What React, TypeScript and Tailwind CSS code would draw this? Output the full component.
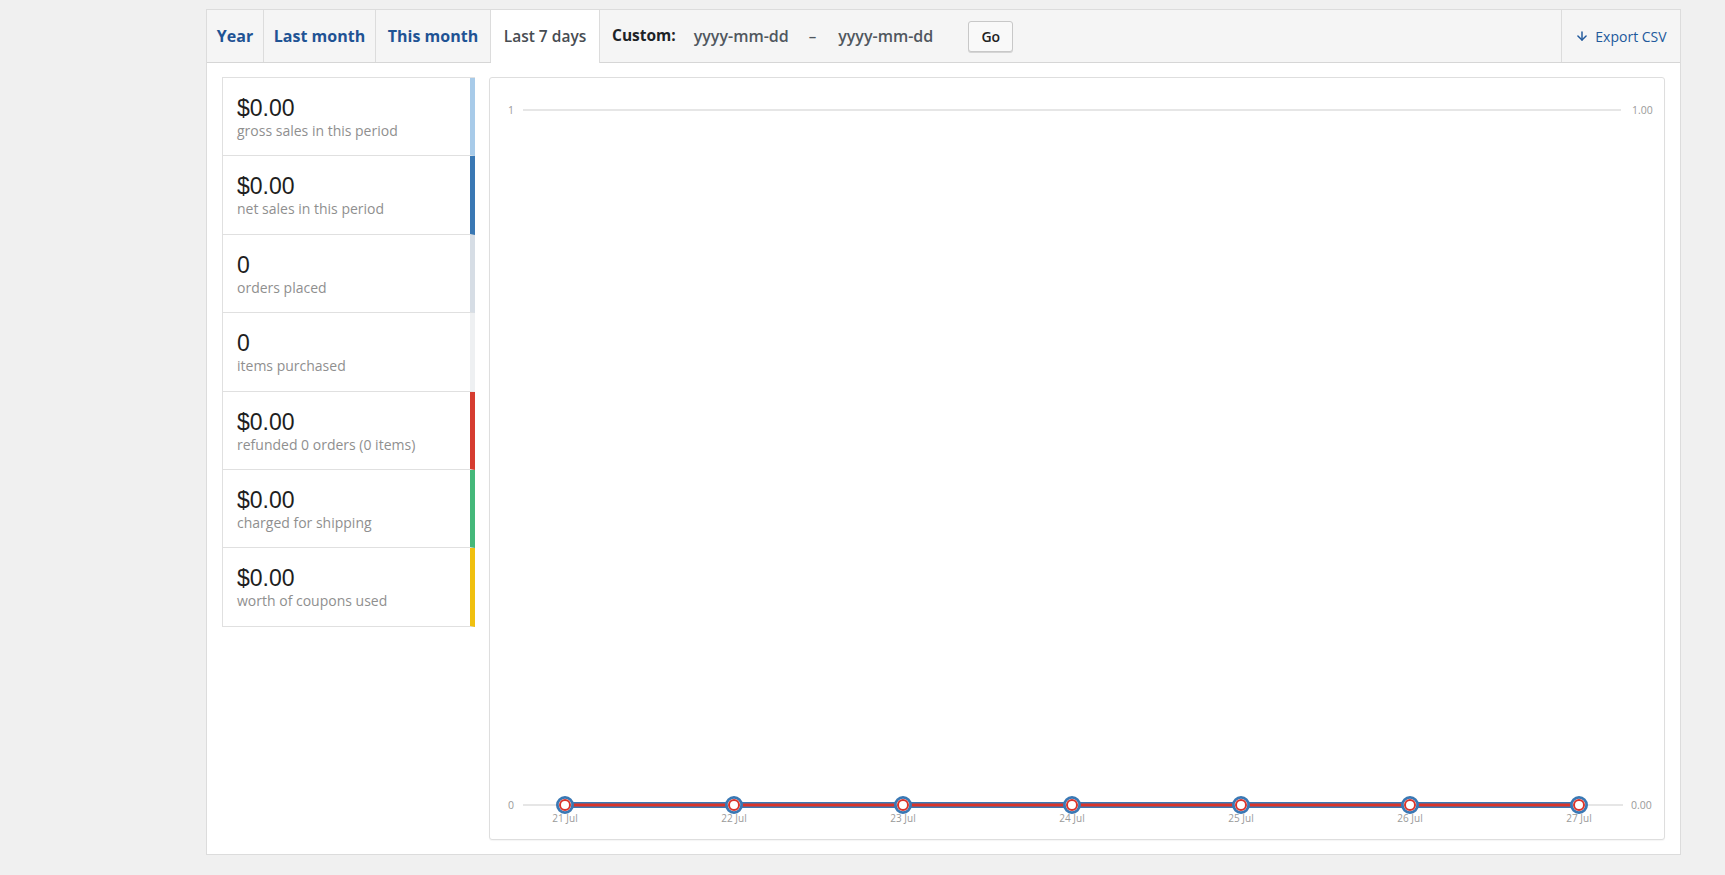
import { ArrowDown } from 'lucide-react';

/**
 * 리포트 범위 탭
 */
const ranges = [
  { label: 'Year', width: 'w-[57px]' },
  { label: 'Last month', width: 'w-[112px]' },
  { label: 'This month', width: 'w-[115px]' },
];

/**
 * 범례 항목
 */
const legend = [
  { value: '$0.00', label: 'gross sales in this period', bar: 'border-r-[#a8cbe9]' },
  { value: '$0.00', label: 'net sales in this period', bar: 'border-r-[#3a78b4]' },
  { value: '0', label: 'orders placed', bar: 'border-r-[#d6dde5]' },
  { value: '0', label: 'items purchased', bar: 'border-r-[#eef0f2]' },
  { value: '$0.00', label: 'refunded 0 orders (0 items)', bar: 'border-r-[#d63c30]' },
  { value: '$0.00', label: 'charged for shipping', bar: 'border-r-[#45b87a]' },
  { value: '$0.00', label: 'worth of coupons used', bar: 'border-r-[#f0c00f]' },
];

const days = ['21 Jul', '22 Jul', '23 Jul', '24 Jul', '25 Jul', '26 Jul', '27 Jul'];

function Chart() {
  const xs = days.map((_, i) => 75 + i * 169);
  const zeroY = 727;

  return (
    <svg width="100%" height="100%" className="block">
      <g fontFamily="'Open Sans', sans-serif" fontSize="10.5" fill="#9a9a9a">
        <text x="18" y="36">1</text>
        <text x="1142" y="36">1.00</text>
        <text x="18" y={zeroY + 4}>0</text>
        <text x="1141" y={zeroY + 4}>0.00</text>
      </g>
      <line x1="33" y1="32" x2="1131" y2="32" stroke="#dedede" strokeWidth="1.5" />
      <line x1="33" y1={zeroY} x2="1133" y2={zeroY} stroke="#dedede" strokeWidth="1.5" />

      <line x1={xs[0]} y1={zeroY} x2={xs[6]} y2={zeroY} stroke="#3a78b4" strokeWidth="6" />
      <line x1={xs[0]} y1={zeroY} x2={xs[6]} y2={zeroY} stroke="#d9342b" strokeWidth="3" />

      {xs.map((x, i) => (
        <g key={days[i]}>
          <circle cx={x} cy={zeroY} r="7.6" fill="#fff" stroke="#3a78b4" strokeWidth="2.8" />
          <circle cx={x} cy={zeroY} r="5" fill="#fff" stroke="#d9342b" strokeWidth="2" />
          <text
            x={x}
            y={zeroY + 17}
            textAnchor="middle"
            fontFamily="'Open Sans', sans-serif"
            fontSize="10"
            fill="#9a9a9a"
          >
            {days[i]}
          </text>
        </g>
      ))}
    </svg>
  );
}

export default function App() {
  return (
    <div className="min-h-[875px] bg-[#f0f0f0] pl-[206px] pt-[9px] font-['Open_Sans',sans-serif]">
      <div className="w-[1475px] h-[846px] flex flex-col border border-[#dcdcdc] bg-white">
        {/* 상단 탭 */}
        <div className="flex h-[53px] shrink-0 items-stretch border-b border-[#d6d6d6] bg-[#f5f5f5]">
          {ranges.map((r) => (
            <div
              key={r.label}
              className={`${r.width} flex items-center justify-center border-r border-[#dcdcdc] text-[16px] font-bold text-[#1f5394]`}
            >
              {r.label}
            </div>
          ))}
          <div className="w-[109px] -mb-px flex items-center justify-center border-r border-[#dcdcdc] bg-white text-[15.5px] font-semibold text-[#474c52]">
            Last 7 days
          </div>
          <div className="flex items-center pl-[12px] text-[15px]">
            <span className="text-[15.5px] font-bold text-[#1d2327]">Custom:</span>
            <span className="ml-[18px] font-semibold text-[16px] text-[#50575e]">yyyy-mm-dd</span>
            <span className="ml-[20px] font-semibold text-[#50575e]">–</span>
            <span className="ml-[22px] font-semibold text-[16px] text-[#50575e]">yyyy-mm-dd</span>
            <button
              type="button"
              className="ml-[35px] h-[31px] w-[45px] rounded-[3px] border border-[#c8c8c8] bg-[#f9f9f9] text-[14px] font-semibold text-[#222] shadow-[0_1px_0_#d5d5d5]"
            >
              Go
            </button>
          </div>
          <div className="ml-auto flex w-[119px] items-center justify-center gap-[6px] border-l border-[#dcdcdc] text-[14px] text-[#21599c]">
            <ArrowDown size={14} strokeWidth={2.5} />
            <span>Export CSV</span>
          </div>
        </div>

        {/* 본문 */}
        <div className="flex flex-1 gap-[14px] px-[15px] pt-[14px] pb-[14px]">
          <ul className="w-[253px] self-start border-t border-[#e0e0e0]">
            {legend.map((item, i) => (
              <li
                key={i}
                className={`h-[78.4px] border-l border-b border-[#e0e0e0] border-r-[5px] ${item.bar} pl-[14px] pt-[17px]`}
              >
                <div className="font-['Liberation_Sans',Arial,sans-serif] text-[23px] leading-[26px] text-[#1e1e1e]">
                  {item.value}
                </div>
                <div className="mt-[1px] text-[14px] leading-[18px] text-[#8f8f8f]">{item.label}</div>
              </li>
            ))}
          </ul>
          <div className="flex-1 rounded-[3px] border border-[#dedede] bg-white shadow-[0_1px_1px_rgba(0,0,0,0.04)]">
            <Chart />
          </div>
        </div>
      </div>
    </div>
  );
}
